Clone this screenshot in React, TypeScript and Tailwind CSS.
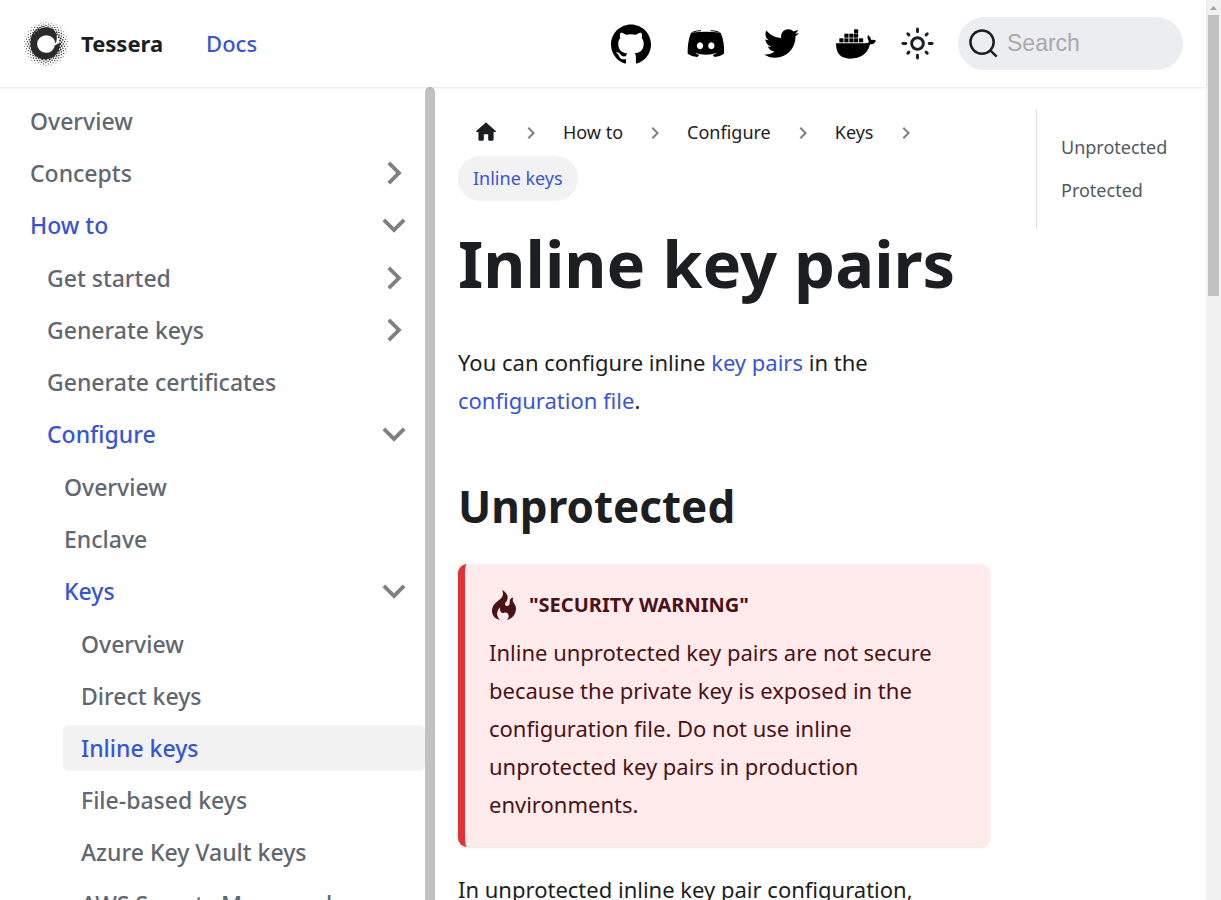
import type { ReactNode } from "react";
import { FaTwitter } from "react-icons/fa";
import { SiGithub } from "react-icons/si";

const CHEVRON = "M7.41 15.41 12 10.83l4.59 4.58L18 14l-6-6-6 6z";

type NavItem = { label: string; open?: boolean; closed?: boolean; active?: boolean; children?: NavItem[] };

const NAV: NavItem[] = [
  { label: "Overview" },
  { label: "Concepts", closed: true },
  {
    label: "How to",
    open: true,
    children: [
      { label: "Get started", closed: true },
      { label: "Generate keys", closed: true },
      { label: "Generate certificates" },
      {
        label: "Configure",
        open: true,
        children: [
          { label: "Overview" },
          { label: "Enclave" },
          {
            label: "Keys",
            open: true,
            children: [
              { label: "Overview" },
              { label: "Direct keys" },
              { label: "Inline keys", active: true },
              { label: "File-based keys" },
              { label: "Azure Key Vault keys" },
              { label: "AWS Secrets Manager keys" },
            ],
          },
        ],
      },
    ],
  },
];

function NavList({ items, nested = false }: { items: NavItem[]; nested?: boolean }) {
  return (
    <ul className={nested ? "mt-[7px] flex flex-col gap-[6px] pl-[17px]" : "flex flex-col gap-[6px] pl-3"}>
      {items.map((item) => (
        <li key={item.label}>
          <div className={item.active ? "flex h-[46px] items-center rounded-md bg-[#f2f2f2]" : "flex h-[46px] items-center rounded-md"}>
            <a
              href="#"
              className={
                item.active || item.open
                  ? "min-w-0 flex-1 truncate pl-[18px] text-[23px] leading-8 font-medium text-[#3655d5]"
                  : "min-w-0 flex-1 truncate pl-[18px] text-[23px] leading-8 font-medium text-[#606770]"
              }
            >
              {item.label}
            </a>
            {(item.open || item.closed) && (
              <button type="button" aria-label={`Toggle ${item.label}`} className="mr-2">
                <svg viewBox="0 0 24 24" className={item.open ? "size-[46px] rotate-180 fill-[#808080]" : "size-[46px] rotate-90 fill-[#808080]"}>
                  <path d={CHEVRON} />
                </svg>
              </button>
            )}
          </div>
          {item.children && <NavList items={item.children} nested />}
        </li>
      ))}
    </ul>
  );
}

function Logo() {
  const dots: { x: number; y: number; r: number }[] = [];
  for (let arm = 0; arm < 26; arm++) {
    for (let i = 0; i < 6; i++) {
      const angle = (arm / 26) * Math.PI * 2 - i * 0.12;
      const radius = 44 + i * 4.3;
      dots.push({ x: 70 + radius * Math.cos(angle), y: 70 + radius * Math.sin(angle), r: 2.9 - i * 0.28 });
    }
  }
  return (
    <svg viewBox="0 0 140 140" className="size-[46px] fill-[#2b2b2b]">
      <path d="M99 70C98 54 86 43 70 43A27 27 0 1 0 97 72C99 75 102 74 104 68C106 74 112 66 113 61C115 92 97 115 70 117C42 117 22 98 23 70C20 40 41 16 72 14C50 20 38 28 32 44C42 26 56 19 74 19C96 20 111 44 99 70Z" />
      {dots.map((d, i) => (
        <circle key={i} cx={d.x} cy={d.y} r={d.r} />
      ))}
    </svg>
  );
}

function DiscordIcon() {
  return (
    <svg viewBox="288 72 120 120" className="size-10">
      <path
        fillRule="evenodd"
        d="M303 98Q325 95 348 95Q371 95 392 98Q404 126 402 161Q390 170 374 171L368 165Q376 162 381 158Q365 164 348 164Q331 164 315 158Q320 162 328 165L322 171Q305 170 293 161Q292 126 303 98ZM330 127a9.500 10.500 0 1 0 .01 0ZM364 127a9.500 10.500 0 1 0 .01 0Z"
      />
      <path d="M307 97Q320 92 333 92M388 97Q375 92 362 92" fill="none" stroke="black" strokeWidth="3" />
    </svg>
  );
}

function DockerIcon() {
  const boxes = [
    [748, 113], [763, 113], [778, 113], [792, 113], [807, 113],
    [763, 99], [778, 99], [792, 99],
    [792, 86],
  ];
  return (
    <svg viewBox="738 70 120 120" className="size-10">
      {boxes.map(([x, y]) => (
        <rect key={`${x}-${y}`} x={x} y={y} width="12.500" height="12" />
      ))}
      <path d="M738 128H824Q834 128 837 123Q830 111 834 103Q843 109 844 118Q851 116 858 120Q854 131 840 131Q829 174 780 174Q738 174 738 128Z" />
    </svg>
  );
}

function SunIcon() {
  return (
    <svg viewBox="0 0 24 24" className="size-[35px]" fill="none" stroke="#1c1e21" strokeWidth="2" strokeLinecap="round">
      <circle cx="12" cy="12" r="4" />
      <path d="M2 12h2M20 12h2M12 2v2M12 20v2M5.300 5.300l.8.8M17.900 17.900l.8.8M18.700 5.300l-.8.8M6.100 17.900l-.8.8" />
    </svg>
  );
}

function Crumb({ children }: { children: ReactNode }) {
  return (
    <li className="flex items-center">
      <a href="#" className="flex h-[45px] items-center px-[15px] pb-[2px]">
        {children}
      </a>
      <svg viewBox="0 0 24 24" className="mx-[5px] size-6 rotate-90 fill-[#808080]">
        <path d={CHEVRON} />
      </svg>
    </li>
  );
}

export default function App() {
  return (
    <div className="flex h-screen overflow-hidden bg-white font-['Noto_Sans',sans-serif] text-[#1c1e21]">
      <div className="flex min-w-0 flex-1 flex-col">
        <header className="z-10 flex h-[87px] shrink-0 items-center bg-white px-[23px] shadow-[0_1px_2px_rgba(0,0,0,0.1)]">
          <a href="#" className="flex items-center gap-3">
            <Logo />
            <b className="pb-[2px] text-[22px] leading-[30px] font-bold">Tessera</b>
          </a>
          <a href="#" className="ml-[43px] pb-[2px] text-[22px] leading-[30px] font-medium text-[#3655d5]">
            Docs
          </a>
          <nav aria-label="Community" className="ml-auto flex items-center gap-[35px]">
            <a href="#" aria-label="GitHub"><SiGithub className="size-10 text-black" /></a>
            <a href="#" aria-label="Discord"><DiscordIcon /></a>
            <a href="#" aria-label="Twitter" className="flex size-10 items-center justify-center"><FaTwitter className="size-[35px] text-black" /></a>
            <a href="#" aria-label="Docker"><DockerIcon /></a>
          </nav>
          <button type="button" aria-label="Switch theme" className="ml-6"><SunIcon /></button>
          <label className="ml-[23px] flex h-[53px] w-[225px] items-center gap-2 rounded-full bg-[#ebedf0] pl-[10px]">
            <svg viewBox="0 0 20 20" className="size-[31px] shrink-0" fill="none" stroke="#1c1e21" strokeWidth="1.600">
              <circle cx="9.060" cy="9.060" r="7.500" />
              <path d="m14.390 14.390 4.080 4.080" />
            </svg>
            <input
              type="search"
              aria-label="Search"
              placeholder="Search"
              className="w-full min-w-0 bg-transparent pb-[2px] font-['Liberation_Sans',sans-serif] text-[23px] leading-7 outline-none placeholder:text-[#a9a9ab]"
            />
          </label>
        </header>
        <div className="flex min-h-0 flex-1">
          <nav aria-label="Docs sidebar" className="flex w-[435px] shrink-0">
            <div className="min-w-0 flex-1 overflow-y-auto pt-[11px] [scrollbar-width:none]">
              <NavList items={NAV} />
            </div>
            <div className="w-[10px] shrink-0 rounded-t-full bg-[#c1c1c1]" />
          </nav>
          <main className="flex min-w-0 flex-1 items-start gap-[46px] overflow-y-auto pt-[23px] pl-[23px] [scrollbar-width:none]">
            <article className="min-w-0 flex-1">
              <nav aria-label="Breadcrumbs">
                <ul className="flex flex-wrap gap-y-px text-[18px] leading-6">
                  <Crumb>
                    <svg viewBox="0 0 24 24" className="size-[26px] fill-[#1c1e21]" aria-label="Home">
                      <path d="M10 19v-5h4v5c0 .55.45 1 1 1h3c.55 0 1-.45 1-1v-7h1.700c.46 0 .68-.57.33-.87L12.670 3.600c-.38-.34-.96-.34-1.340 0l-8.360 7.530c-.34.3-.13.87.33.87H5v7c0 .55.45 1 1 1h3c.55 0 1-.45 1-1z" />
                    </svg>
                  </Crumb>
                  <Crumb>How to</Crumb>
                  <Crumb>Configure</Crumb>
                  <Crumb>Keys</Crumb>
                  <li className="flex h-[45px] items-center rounded-full bg-[#f2f2f2] px-[15px] pb-[2px] text-[#3655d5]">Inline keys</li>
                </ul>
              </nav>
              <h1 className="mt-[19px] text-[65px] leading-[86px] font-bold">Inline key pairs</h1>
              <p className="mt-[37px] text-[22px] leading-[38px]">
                You can configure inline <a href="#" className="text-[#3655d5]">key pairs</a> in the{" "}
                <a href="#" className="text-[#3655d5]">configuration file</a>.
              </p>
              <h2 className="mt-[58px] text-[44px] leading-[58px] font-bold">Unprotected</h2>
              <div className="mt-[29px] rounded-[9px] border-l-[7px] border-[#e13238] bg-[#ffebec] pt-[23px] pr-6 pb-6 pl-6 text-[#4b1113] shadow-[0_1px_2px_rgba(0,0,0,0.1)]">
                <h5 className="flex h-9 items-center gap-[10px] text-[20px] leading-6 font-bold uppercase">
                  <svg viewBox="0 0 12 16" className="h-8 w-[30px] fill-[#4b1113]">
                    <path d="M5.050.31c.81 2.170.41 3.380-.52 4.310C3.550 5.670 1.980 6.450.9 7.980c-1.450 2.050-1.700 6.530 3.530 7.700-2.200-1.160-2.670-4.520-.3-6.610-.61 2.030.53 3.330 1.940 2.860 1.390-.47 2.300.53 2.270 1.670-.02.78-.31 1.440-1.130 1.810 3.420-.59 4.780-3.420 4.780-5.560 0-2.840-2.530-3.220-1.250-5.610-1.520.13-2.030 1.130-1.890 2.750.09 1.080-1.020 1.800-1.860 1.330-.67-.41-.66-1.190-.06-1.780C8.180 5.310 8.680 2.450 5.050.32L5.030.3l.02.01z" />
                  </svg>
                  "Security warning"
                </h5>
                <p className="mt-[10px] text-[22px] leading-[38px]">
                  Inline unprotected key pairs are not secure because the private key is exposed in the configuration file. Do not use inline unprotected key pairs in production environments.
                </p>
              </div>
              <p className="mt-[23px] text-[22px] leading-[38px]">In unprotected inline key pair configuration,</p>
            </article>
            <nav aria-label="On this page" className="w-[170px] shrink-0 border-l border-[#dadde1] pt-[14px] pb-4 pl-6 text-[18px] leading-6 text-[#525860]">
              <ul className="flex flex-col gap-[19px] py-[11px]">
                <li><a href="#">Unprotected</a></li>
                <li><a href="#">Protected</a></li>
              </ul>
            </nav>
          </main>
        </div>
      </div>
      <div aria-hidden="true" className="flex w-[15px] shrink-0 flex-col items-center bg-[#f1f1f1]">
        <svg viewBox="0 0 15 15" className="size-[15px] shrink-0 fill-[#a3a3a3]"><path d="M4 10h7L7.500 6z" /></svg>
        <div className="h-[281px] w-[11px] bg-[#c1c1c1]" />
      </div>
    </div>
  );
}
